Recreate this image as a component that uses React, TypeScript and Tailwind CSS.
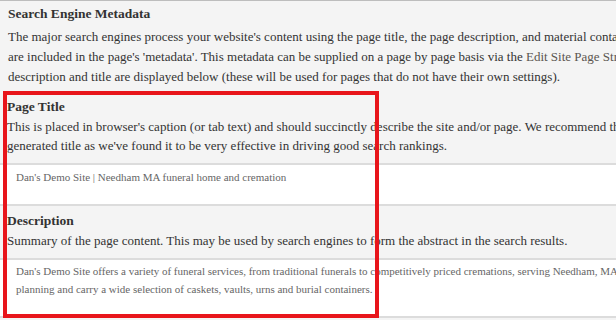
import React from 'react';

const serif = { fontFamily: '"Liberation Serif", "DejaVu Serif", serif' };

const FieldHead = ({ title, lines, top }: { title: string; lines: string[]; top: string }) => (
  <div className={`px-[7px] pb-[8px] ${top}`}>
    <h3 className="text-[13.5px] leading-[20px] font-bold text-[#333]">{title}</h3>
    {lines.map((l) => (
      <p key={l} className="whitespace-nowrap text-[13px] leading-[19px] text-[#333]">
        {l}
      </p>
    ))}
  </div>
);

export default function App() {
  return (
    <div style={serif} className="relative h-[320px] w-[616px] overflow-hidden bg-[#f4f4f4]">
      <div className="border-t border-[#bdbdbd] px-2 pt-[3px] pb-[10px]">
        <h2 className="text-[13.5px] leading-[20px] font-bold text-[#333]">Search Engine Metadata</h2>
        <div className="mt-[3px] text-[13px] leading-[20px] text-[#333]">
          <p className="whitespace-nowrap">
            The major search engines process your website's content using the page title, the page description, and material contained
          </p>
          <p className="whitespace-nowrap">
            are included in the page's 'metadata'. This metadata can be supplied on a page by page basis via the{' '}
            <span className="text-[#5b5650]">Edit Site Page Structure</span>
          </p>
          <p className="whitespace-nowrap">
            description and title are displayed below (these will be used for pages that do not have their own settings).
          </p>
        </div>
      </div>

      <FieldHead
        top="pt-0"
        title="Page Title"
        lines={[
          "This is placed in browser's caption (or tab text) and should succinctly describe the site and/or page. We recommend that",
          "generated title as we've found it to be very effective in driving good search rankings.",
        ]}
      />
      <div className="h-[43px] border-y-2 border-[#dcdcdc] bg-white px-[16px] pt-[3px] text-[11px] leading-[18px] text-[#666]">
        Dan's Demo Site | Needham MA funeral home and cremation
      </div>

      <FieldHead
        top="pt-[5px]"
        title="Description"
        lines={['Summary of the page content. This may be used by search engines to form the abstract in the search results.']}
      />
      <div className="h-[60px] border-y-2 border-[#dcdcdc] bg-white px-[16px] pt-[2px] text-[11px] leading-[18px] text-[#666]">
        <p className="whitespace-nowrap">
          Dan's Demo Site offers a variety of funeral services, from traditional funerals to competitively priced cremations, serving Needham, MA and
        </p>
        <p className="whitespace-nowrap">planning and carry a wide selection of caskets, vaults, urns and burial containers.</p>
      </div>

      {/* annotation box */}
      <div className="absolute left-[3px] top-[91px] h-[227px] w-[376px] border-[4px] border-[#e8151b]" />
    </div>
  );
}
